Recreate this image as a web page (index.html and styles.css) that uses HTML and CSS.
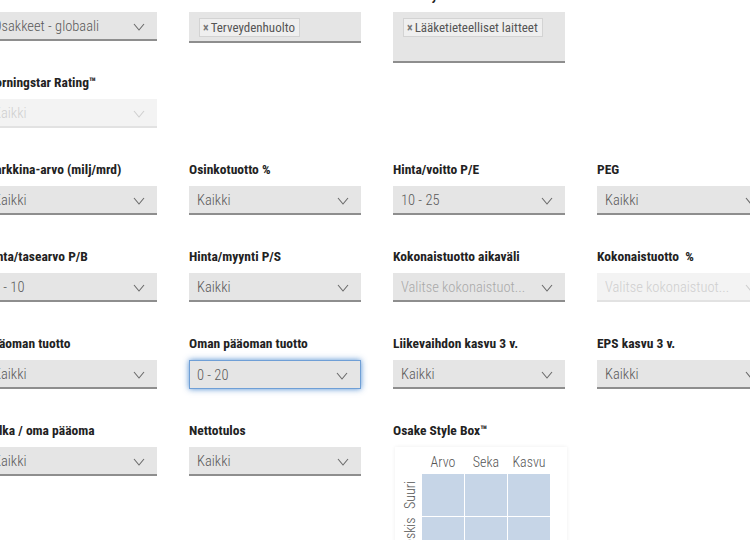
FILE: index.html
```html
<!DOCTYPE html>
<html lang="fi">
<head>
    <meta charset="UTF-8">
    <meta name="viewport" content="width=device-width, initial-scale=1.0">
    <title>Osakevalitsin</title>
    <link rel="stylesheet" href="styles.css">
</head>
<body>
    <div class="filters">
        <div class="field">
            <label>Markkina</label>
            <div class="sel"><span>Osakkeet - globaali</span><svg class="chev" viewBox="0 0 12 8"><polyline points="1,1 6,7 11,1"/></svg></div>
        </div>
        <div class="field">
            <label>Sektori</label>
            <div class="sel multi"><span class="tag"><b>×</b>Terveydenhuolto</span></div>
        </div>
        <div class="field">
            <label>Industry</label>
            <div class="sel multi tall"><span class="tag"><b>×</b>Lääketieteelliset laitteet</span></div>
        </div>
        <div class="field empty"></div>

        <div class="field">
            <label>Morningstar Rating™</label>
            <div class="sel off"><span>Kaikki</span><svg class="chev" viewBox="0 0 12 8"><polyline points="1,1 6,7 11,1"/></svg></div>
        </div>
        <div class="field empty"></div>
        <div class="field empty"></div>
        <div class="field empty"></div>

        <div class="field">
            <label>Markkina-arvo (milj/mrd)</label>
            <div class="sel"><span>Kaikki</span><svg class="chev" viewBox="0 0 12 8"><polyline points="1,1 6,7 11,1"/></svg></div>
        </div>
        <div class="field">
            <label>Osinkotuotto %</label>
            <div class="sel"><span>Kaikki</span><svg class="chev" viewBox="0 0 12 8"><polyline points="1,1 6,7 11,1"/></svg></div>
        </div>
        <div class="field">
            <label>Hinta/voitto P/E</label>
            <div class="sel"><span>10 - 25</span><svg class="chev" viewBox="0 0 12 8"><polyline points="1,1 6,7 11,1"/></svg></div>
        </div>
        <div class="field">
            <label>PEG</label>
            <div class="sel"><span>Kaikki</span><svg class="chev" viewBox="0 0 12 8"><polyline points="1,1 6,7 11,1"/></svg></div>
        </div>

        <div class="field">
            <label>Hinta/tasearvo P/B</label>
            <div class="sel"><span>0 - 10</span><svg class="chev" viewBox="0 0 12 8"><polyline points="1,1 6,7 11,1"/></svg></div>
        </div>
        <div class="field">
            <label>Hinta/myynti P/S</label>
            <div class="sel"><span>Kaikki</span><svg class="chev" viewBox="0 0 12 8"><polyline points="1,1 6,7 11,1"/></svg></div>
        </div>
        <div class="field">
            <label>Kokonaistuotto aikaväli</label>
            <div class="sel hint"><span>Valitse kokonaistuot...</span><svg class="chev" viewBox="0 0 12 8"><polyline points="1,1 6,7 11,1"/></svg></div>
        </div>
        <div class="field">
            <label>Kokonaistuotto &nbsp;%</label>
            <div class="sel off"><span>Valitse kokonaistuot...</span><svg class="chev" viewBox="0 0 12 8"><polyline points="1,1 6,7 11,1"/></svg></div>
        </div>

        <div class="field">
            <label>Pääoman tuotto</label>
            <div class="sel"><span>Kaikki</span><svg class="chev" viewBox="0 0 12 8"><polyline points="1,1 6,7 11,1"/></svg></div>
        </div>
        <div class="field">
            <label>Oman pääoman tuotto</label>
            <div class="sel focus"><span>0 - 20</span><svg class="chev" viewBox="0 0 12 8"><polyline points="1,1 6,7 11,1"/></svg></div>
        </div>
        <div class="field">
            <label>Liikevaihdon kasvu 3 v.</label>
            <div class="sel"><span>Kaikki</span><svg class="chev" viewBox="0 0 12 8"><polyline points="1,1 6,7 11,1"/></svg></div>
        </div>
        <div class="field">
            <label>EPS kasvu 3 v.</label>
            <div class="sel"><span>Kaikki</span><svg class="chev" viewBox="0 0 12 8"><polyline points="1,1 6,7 11,1"/></svg></div>
        </div>

        <div class="field">
            <label>Velka / oma pääoma</label>
            <div class="sel"><span>Kaikki</span><svg class="chev" viewBox="0 0 12 8"><polyline points="1,1 6,7 11,1"/></svg></div>
        </div>
        <div class="field">
            <label>Nettotulos</label>
            <div class="sel"><span>Kaikki</span><svg class="chev" viewBox="0 0 12 8"><polyline points="1,1 6,7 11,1"/></svg></div>
        </div>
        <div class="field box">
            <label>Osake Style Box™</label>
            <div class="stylebox">
                <div class="corner"></div>
                <div class="colhead">Arvo</div>
                <div class="colhead">Seka</div>
                <div class="colhead">Kasvu</div>
                <div class="rowhead">Suuri</div>
                <div class="cell"></div><div class="cell"></div><div class="cell"></div>
                <div class="rowhead long">Keskisuuri</div>
                <div class="cell"></div><div class="cell"></div><div class="cell"></div>
                <div class="rowhead">Pieni</div>
                <div class="cell"></div><div class="cell"></div><div class="cell"></div>
            </div>
        </div>
    </div>
</body>
</html>
```

FILE: styles.css
```css
*{margin:0;padding:0;box-sizing:border-box;}
html{background:#fff;overflow:hidden;}
body{min-height:600px;font-family:"Roboto Condensed","Open Sans Condensed","Liberation Sans Narrow","DejaVu Sans Condensed",sans-serif;font-stretch:condensed;color:#222;}

/* filter grid, 4 columns */
.filters{display:grid;grid-template-columns:repeat(4,172px);column-gap:32px;row-gap:33px;padding-bottom:40px;margin:-14px 0 0 -15px;}
.field{height:54px;}
.field.box{height:auto;}
.field label{display:block;height:18px;line-height:18px;margin-bottom:8px;font-size:13.5px;font-weight:bold;color:#222;white-space:nowrap;}

/* select box */
.sel{position:relative;display:flex;align-items:center;height:29px;padding:2px 12px 0 8px;background:#e5e5e5;border-bottom:2px solid #8e8e8e;font-size:14.5px;font-weight:300;color:#595959;white-space:nowrap;}
.sel span{flex:1;overflow:hidden;}
.chev{width:12px;height:8px;fill:none;stroke:#6a6a6a;stroke-width:1.1;}
.sel.hint{color:#a9a9a9;}
.sel.off{background:#f3f3f3;border-bottom-color:#e2e2e2;color:#cfcfcf;}
.sel.off .chev{stroke:#cfcfcf;}
.sel.focus{border:1px solid #6f9fd6;box-shadow:0 0 6px rgba(50,120,200,.85);padding-left:7px;}

/* tag list */
.sel.multi{align-items:flex-start;padding:6px 10px;height:31px;}
.sel.tall{height:51px;}
.tag{flex:none !important;display:inline-flex;align-items:center;height:19px;padding:0 4px 0 3px;background:#efefef;border:1px solid #d3d3d3;font-size:13px;font-weight:400;color:#555;}
.tag b{font-size:12px;color:#777;margin-right:2px;}

/* style box */
.stylebox{display:grid;grid-template-columns:26px repeat(3,42px);grid-template-rows:26px repeat(3,42px);gap:1px;width:172px;padding:0 15px 0 0;margin-left:2px;background:#fff;box-shadow:0 0 4px rgba(0,0,0,.07);}
.colhead{display:flex;align-items:center;justify-content:center;font-size:14px;font-weight:300;color:#555;padding-top:4px;}
.rowhead{display:flex;align-items:center;justify-content:center;overflow:hidden;writing-mode:vertical-rl;transform:rotate(180deg);font-size:14px;font-weight:300;color:#555;white-space:nowrap;padding-right:3px;}
.rowhead.long{justify-content:flex-start;padding-top:6px;}
.cell{background:#c6d5e7;}
```
